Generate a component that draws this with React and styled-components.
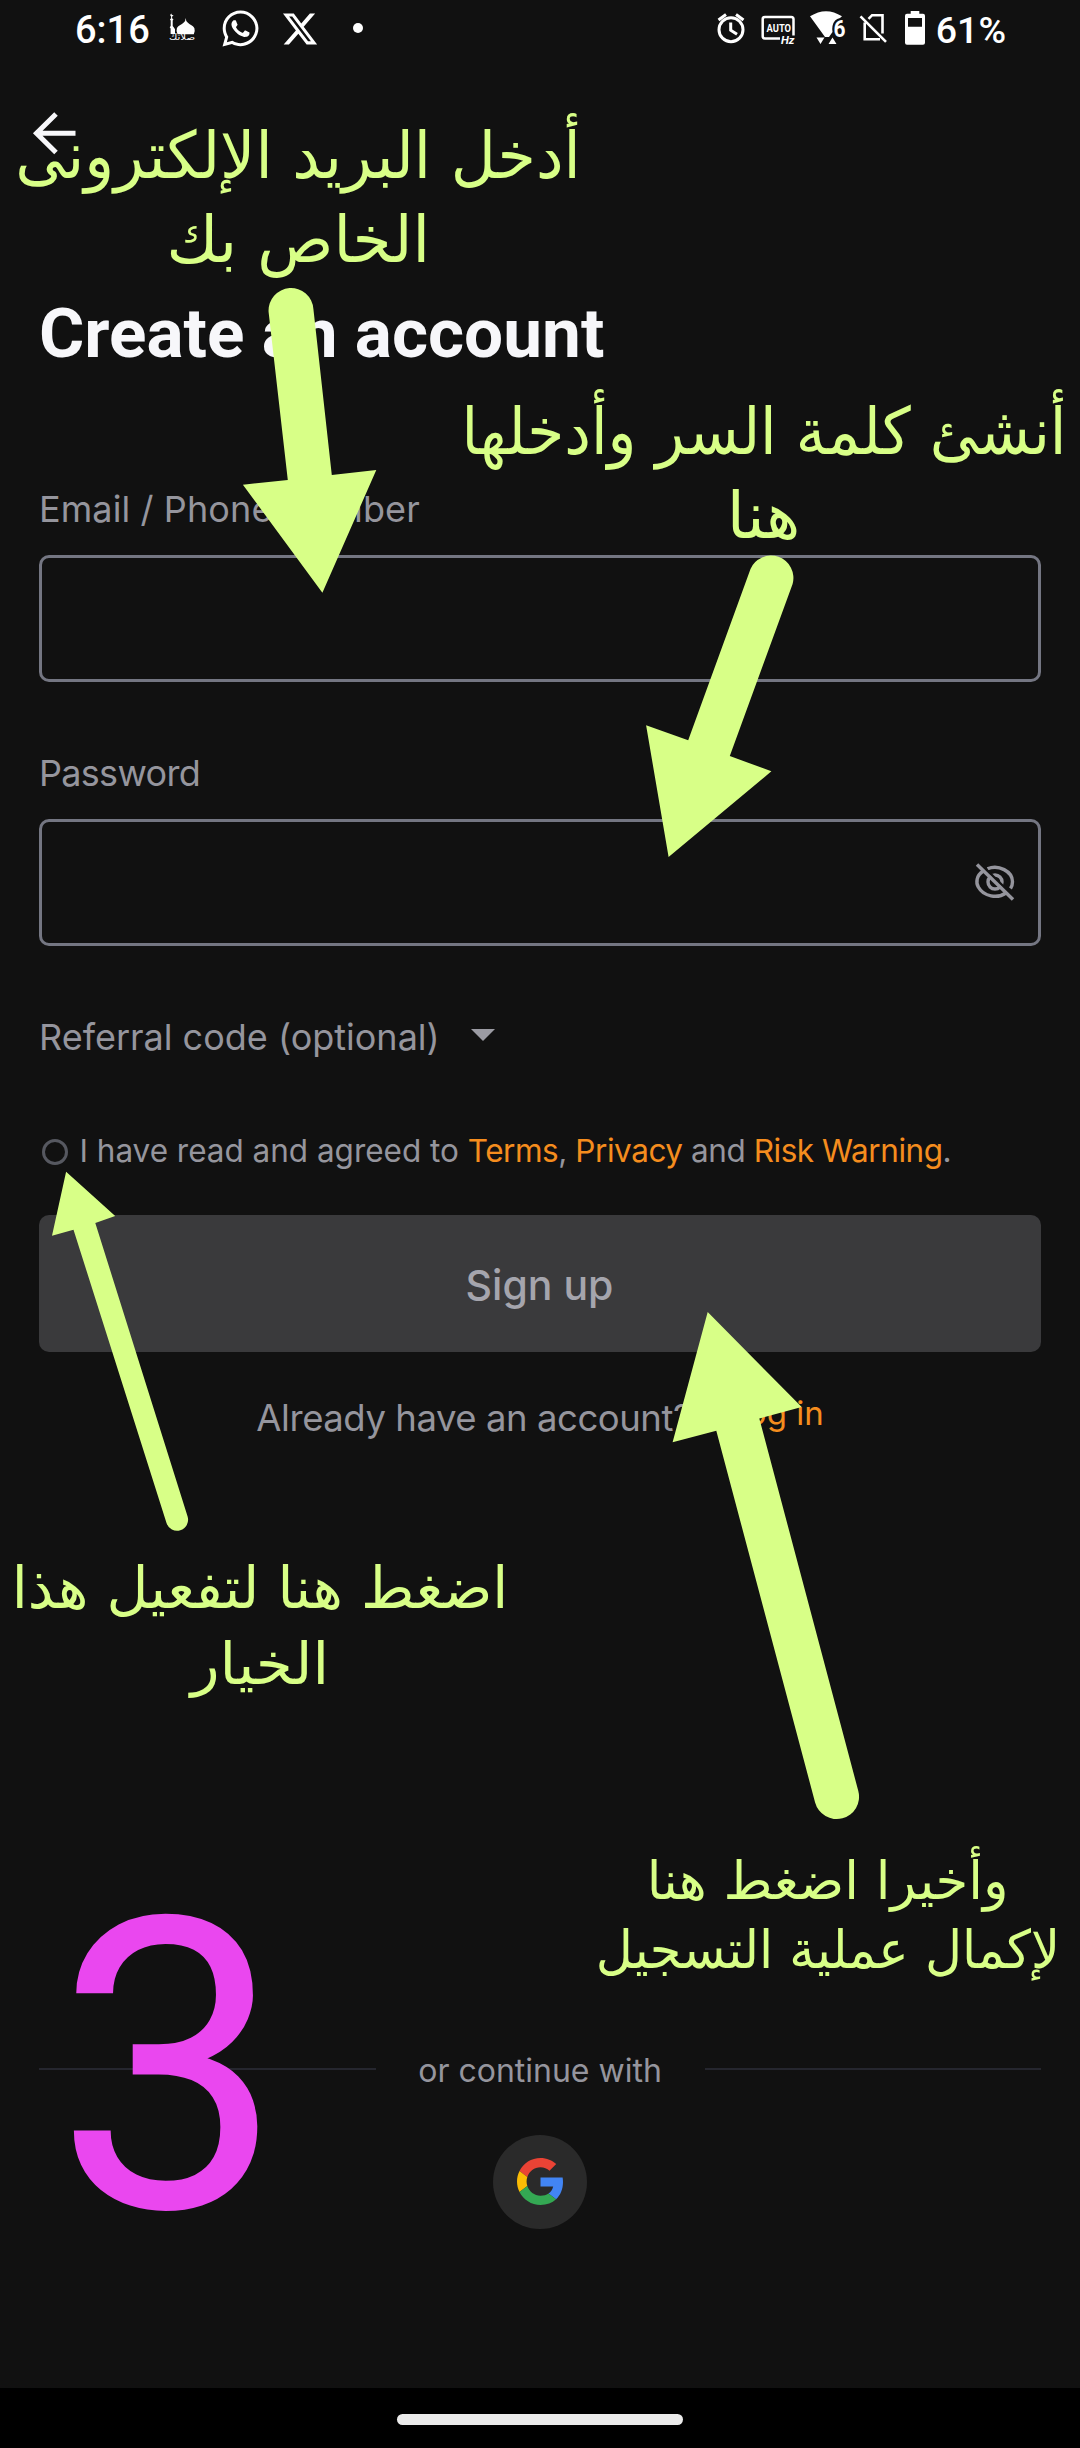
import React from "react";
import styled, { createGlobalStyle } from "styled-components";
import { FaWhatsapp, FaXTwitter } from "react-icons/fa6";

const LIME = "#d8ff87";
const ORANGE = "#f58d1e";
const GREY = "#95959d";
const BG = "#111111";

const GlobalStyle = createGlobalStyle`
  * { box-sizing: border-box; }
  body { margin: 0; background: ${BG}; }
`;

const Screen = styled.div`
  position: relative;
  width: 1080px;
  height: 2448px;
  overflow: hidden;
  display: flex;
  flex-direction: column;
  background: ${BG};
  font-family: Inter, "Noto Sans", sans-serif;
  color: ${GREY};
`;

/* status bar */

const StatusBar = styled.header`
  height: 60px;
  padding: 0 74px 0 75px;
  display: flex;
  justify-content: space-between;
  color: #fff;
  font-family: Roboto, sans-serif;
`;

const StatusGroup = styled.div`
  display: flex;
  align-items: flex-start;
`;

const StatusText = styled.span`
  margin-left: ${(p) => p.$ml || 0}px;
  font-size: ${(p) => p.$size}px;
  font-weight: 500;
  line-height: 60px;
  white-space: nowrap;
`;

const StatusSvg = styled.svg`
  display: block;
  height: 60px;
  width: ${(p) => p.$w}px;
  margin-left: ${(p) => p.$ml || 0}px;
  overflow: visible;
`;

const BrandIcon = styled.span`
  display: flex;
  width: ${(p) => p.$w}px;
  margin-left: ${(p) => p.$ml}px;
  height: 57px;
  align-items: center;
  justify-content: center;

  svg {
    flex: none;
  }
`;

const Dot = styled.span`
  width: 10px;
  height: 10px;
  margin: 23px 0 0 36px;
  border-radius: 50%;
  background: #fff;
`;

/* form */

const BackButton = styled.button`
  width: 48px;
  height: 48px;
  margin: 49px 0 0 30px;
  padding: 0;
  border: 0;
  background: none;
  color: #f7f7fa;

  svg {
    display: block;
  }
`;

const Form = styled.main`
  padding: 0 39px;
  display: flex;
  flex-direction: column;
`;

const Title = styled.h1`
  margin: 137px 0 0;
  font: 700 69.3px/80px Roboto, sans-serif;
  color: #f7f7fa;
  white-space: nowrap;
`;

const Field = styled.label`
  display: flex;
  flex-direction: column;
  gap: 24px;
  margin-top: ${(p) => p.$mt}px;
`;

const FieldLabel = styled.span`
  font-size: 36px;
  line-height: 44px;
  letter-spacing: ${(p) => p.$ls || 0}px;
`;

const InputBox = styled.span`
  height: 126.5px;
  border: 3px solid #747682;
  border-radius: 10px;
  padding-right: 21px;
  display: flex;
  align-items: center;
  justify-content: flex-end;
`;

const Referral = styled.div`
  margin-top: 69.5px;
  display: flex;
  align-items: center;
  font-size: 36px;
  line-height: 44px;
`;

const Caret = styled.span`
  margin: 0 0 4px 31px;
  border: 12px solid transparent;
  border-top-color: #9b9ba3;
  border-bottom: 0;
`;

const Agreement = styled.div`
  margin-top: 72px;
  padding-left: 3px;
  display: flex;
  align-items: center;
  font-size: 31.5px;
  line-height: 40px;
  letter-spacing: -0.45px;
  white-space: nowrap;
`;

const Lead = styled.span`
  letter-spacing: -0.02px;
`;

const Radio = styled.span`
  width: 26px;
  height: 26px;
  margin: 2px 11.5px 0 0;
  border: 3px solid #565860;
  border-radius: 50%;
`;

const Accent = styled.span`
  color: ${ORANGE};
`;

const SubmitButton = styled.button`
  height: 137px;
  margin-top: 44px;
  padding: 2px 1px 0 0;
  border: 0;
  border-radius: 10px;
  background: #3a3a3c;
  color: #a5a5ad;
  font: 500 41px/50px Inter, sans-serif;
`;

const LoginRow = styled.div`
  margin-top: 43.5px;
  display: flex;
  justify-content: center;
  align-items: flex-start;
  gap: 37px;
`;

const Question = styled.span`
  font-size: 36.5px;
  line-height: 44px;
  letter-spacing: -0.45px;
`;

const LoginLink = styled.a`
  font-size: 33px;
  line-height: 34px;
  color: ${ORANGE};
`;

const Divider = styled.div`
  margin-top: 611px;
  display: flex;
  align-items: center;
  gap: 42.7px;
  font-size: 32px;
  line-height: 40px;
  white-space: nowrap;
`;

const Rule = styled.span`
  flex: 1;
  height: 2px;
  margin-bottom: 4px;
  background: #25262e;
`;

const GoogleButton = styled.button`
  align-self: center;
  width: 94px;
  height: 94px;
  margin-top: 44px;
  padding: 0;
  border: 0;
  border-radius: 50%;
  background: #2a2a2a;
  display: flex;
  align-items: center;
  justify-content: center;
`;

const GestureBar = styled.footer`
  height: 60px;
  margin-top: auto;
  background: #000;
  display: flex;
  justify-content: center;
  padding-top: 26px;
`;

const GesturePill = styled.span`
  width: 286px;
  height: 11px;
  border-radius: 6px;
  background: #ebebeb;
`;

/* annotations laid over the screen */

const Arrows = styled.svg`
  position: absolute;
  inset: 0;
  pointer-events: none;
`;

const Note = styled.div`
  position: absolute;
  left: ${(p) => p.$cx}px;
  top: ${(p) => p.$top}px;
  transform: translateX(-50%);
  display: flex;
  flex-direction: column;
  align-items: center;
  direction: rtl;
  font-family: "DejaVu Sans", sans-serif;
  font-size: ${(p) => p.$size}px;
  line-height: ${(p) => p.$lh}px;
  color: ${LIME};
  white-space: nowrap;
`;

const NoteLine = styled.span`
  transform: scaleX(${(p) => p.$sx});
`;

const StepNumber = styled.div`
  position: absolute;
  left: 55px;
  top: 1868px;
  font: 400 407px/400px Roboto, sans-serif;
  color: #ea47ef;
`;

const MosqueIcon = () => (
  <StatusSvg $w={26} $ml={19.5} viewBox="170 0 26 60" fill="#fff">
    <path d="M171.6 34V28.5l-.9-1.2 1-1.3V20.5l-.8-1 1.2-1.2V16.6a2 2 0 0 1 .3-3.1 1.5 1.5 0 0 0 2 1.6 1.6 1.6 0 0 1-1.3 1.5v1.7l1.4 1.2-.8 1v5.5l1 1.3 1.3 2V34z" />
    <path d="M178.5 34.2q-1.600-3-.6-6c1.100-3 6.300-4 8.200-7.200l.6-3 .6 3c1.900 3.200 7 4.200 8.100 7.200q1 3-.6 6z" />
    <text x="170" y="39.5" fontSize="9" textLength="26" lengthAdjust="spacingAndGlyphs" fontFamily="DejaVu Sans">صلاتك</text>
  </StatusSvg>
);

const AlarmIcon = () => (
  <StatusSvg $w={28} viewBox="716 0 28 60" fill="none" stroke="#fff" strokeWidth="3">
    <circle cx="730" cy="29.700" r="12" />
    <path d="M717.500 20l7.500-5.500M742.500 20l-7.500-5.500M729.700 22.500v7.700l6.300 4" />
  </StatusSvg>
);

const AutoHzIcon = () => (
  <StatusSvg $w={34} $ml={16} viewBox="760 0 34 60" fill="#fff">
    <path d="M779 38.500H764q-2.300 0-2.300-2.300V19.300q0-2.300 2.300-2.300h26.200q2.300 0 2.300 2.300V35.500" fill="none" stroke="#fff" strokeWidth="2.500" />
    <text x="765.500" y="32.300" fontSize="11.500" fontWeight="700" fontFamily="Roboto" textLength="24.500" lengthAdjust="spacingAndGlyphs">AUTO</text>
    <text x="780" y="44.300" fontSize="11" fontWeight="700" fontStyle="italic" fontFamily="Roboto" textLength="13.500" lengthAdjust="spacingAndGlyphs">Hz</text>
  </StatusSvg>
);

const WifiIcon = () => (
  <StatusSvg $w={35} $ml={15} viewBox="809 0 35 60" fill="#fff">
    <path d="M809 16.300Q825 6 841 16.300L839 18q-6 1-7.500 8-.6 3.500 0 6l-3.500 5h-4z" />
    <path d="M815.500 37.500h8l-4 6.500zM827.500 44h8l-4-6.500z" />
    <text x="832.500" y="36.700" fontSize="24" fontWeight="700" fontFamily="Roboto" textLength="12" lengthAdjust="spacingAndGlyphs">6</text>
  </StatusSvg>
);

const NoSimIcon = () => (
  <StatusSvg $w={26} $ml={15} viewBox="859 0 26 60" fill="none" stroke="#fff" strokeWidth="2.600">
    <path d="M859.500 16.300l25.500 25.500M863.700 22.500V39.300H879M867.500 18.800l3.600-3.600H881.500V33.500" />
  </StatusSvg>
);

const BatteryIcon = () => (
  <StatusSvg $w={20} $ml={19} viewBox="904 0 20 60" fill="#fff">
    <path fillRule="evenodd" d="M909.700 11h8.600v2.700h3.700q2 0 2 2v27q0 2-2 2h-16q-2 0-2-2v-27q0-2 2-2h3.700zM907 18v8.700h14V18z" />
  </StatusSvg>
);

const EyeOffIcon = () => (
  <svg width="44" height="44" viewBox="973.5 860 44 44" fill="none" stroke={GREY} strokeWidth="3.400">
    <path d="M988 868.800C999 864 1013 871.500 1013 881.700Q1013 885.500 1011 888.500" />
    <path d="M983.500 871.300C977 875.500 976 882.500 979 887.300C984 896.500 998 899 1006.500 893" />
    <circle cx="995.500" cy="882" r="7" />
    <path d="M980.500 863.500l36 35.500" stroke={BG} strokeWidth="2.500" />
    <path d="M977.500 864.500l36 35" />
  </svg>
);

const GoogleLogo = () => (
  <svg width="47" height="47" viewBox="0 0 48 48">
    <path fill="#ea4335" d="M24 9.500c3.540 0 6.710 1.220 9.210 3.600l6.850-6.850C35.900 2.380 30.470 0 24 0 14.620 0 6.510 5.380 2.560 13.220l7.980 6.190C12.430 13.720 17.740 9.500 24 9.500z" />
    <path fill="#4285f4" d="M46.980 24.550c0-1.570-.15-3.090-.38-4.550H24v9.020h12.940c-.58 2.960-2.260 5.480-4.780 7.180l7.730 6c4.510-4.180 7.090-10.360 7.090-17.650z" />
    <path fill="#fbbc05" d="M10.530 28.590c-.48-1.450-.76-2.990-.76-4.590s.27-3.140.76-4.590l-7.980-6.190C.92 16.460 0 20.120 0 24c0 3.880.92 7.540 2.560 10.780l7.970-6.190z" />
    <path fill="#34a853" d="M24 48c6.480 0 11.930-2.130 15.890-5.810l-7.730-6c-2.150 1.450-4.920 2.300-8.160 2.300-6.260 0-11.570-4.220-13.470-9.910l-7.980 6.190C6.510 42.620 14.620 48 24 48z" />
  </svg>
);

export default function App() {
  return (
    <Screen>
      <GlobalStyle />
      <StatusBar>
        <StatusGroup>
          <StatusText $size={38}>6:16</StatusText>
          <MosqueIcon />
          <BrandIcon $w={36} $ml={27}><FaWhatsapp size={41} /></BrandIcon>
          <BrandIcon $w={34} $ml={25}><FaXTwitter size={38} /></BrandIcon>
          <Dot />
        </StatusGroup>
        <StatusGroup>
          <AlarmIcon />
          <AutoHzIcon />
          <WifiIcon />
          <NoSimIcon />
          <BatteryIcon />
          <StatusText $size={37.5} $ml={11}>61%</StatusText>
        </StatusGroup>
      </StatusBar>

      <BackButton aria-label="Back">
        <svg width="48" height="48" viewBox="30 109 48 48" fill="none" stroke="currentColor" strokeWidth="5">
          <path d="M75.500 133.300H37M56 114L36.500 133.300L56 152.500" />
        </svg>
      </BackButton>

      <Form>
        <Title>Create an account</Title>
        <Field $mt={113}>
          <FieldLabel $ls={0.1}>Email / Phone Number</FieldLabel>
          <InputBox />
        </Field>
        <Field $mt={69.5}>
          <FieldLabel $ls={-0.7}>Password</FieldLabel>
          <InputBox><EyeOffIcon /></InputBox>
        </Field>
        <Referral>
          Referral code (optional)
          <Caret />
        </Referral>
        <Agreement>
          <Radio />
          <span>
            <Lead>I have read and agreed to </Lead>
            <Accent>Terms</Accent>, <Accent>Privacy</Accent> and <Accent>Risk Warning</Accent>.
          </span>
        </Agreement>
        <SubmitButton>Sign up</SubmitButton>
        <LoginRow>
          <Question>Already have an account?</Question>
          <LoginLink>Log in</LoginLink>
        </LoginRow>
        <Divider>
          <Rule />
          or continue with
          <Rule />
        </Divider>
        <GoogleButton aria-label="Google"><GoogleLogo /></GoogleButton>
      </Form>

      <GestureBar><GesturePill /></GestureBar>

      <Arrows width="1080" height="2448" viewBox="0 0 1080 2448" fill={LIME}>
        <path d="M268.600 312A22.400 22.400 0 0 1 313.400 309L331.800 475L376.300 470L322.400 592.700L242.900 484.700L287.800 480Z" />
        <path d="M750.500 569A22.400 22.400 0 0 1 792.600 584L729.800 756L771.400 771.300L668.600 857L646.100 725.300L688.200 740.300Z" />
        <path d="M66.100 1171.700L115.200 1216L95.300 1223L187.600 1516.500A11 11 0 0 1 166.500 1523L73.500 1229.700L52 1235.700Z" />
        <path d="M707.700 1312L801.700 1407L759.300 1418.400L858.300 1791A22.300 22.300 0 0 1 815.100 1802.500L716.300 1430.800L672.600 1442.300Z" />
      </Arrows>

      <Note $cx={298} $top={113.5} $size={65} $lh={84.7}>
        <NoteLine $sx={0.953}>أدخل البريد الإلكترونى</NoteLine>
        <NoteLine $sx={0.97}>الخاص بك</NoteLine>
      </Note>
      <Note $cx={763.5} $top={390} $size={65} $lh={84}>
        <NoteLine $sx={0.921}>أنشئ كلمة السر وأدخلها</NoteLine>
        <NoteLine $sx={1}>هنا</NoteLine>
      </Note>
      <Note $cx={260} $top={1550} $size={58} $lh={76.3}>
        <NoteLine $sx={0.992}>اضغط هنا لتفعيل هذا</NoteLine>
        <NoteLine $sx={1.03}>الخيار</NoteLine>
      </Note>
      <Note $cx={827.5} $top={1845.5} $size={53} $lh={69}>
        <NoteLine $sx={0.998}>وأخيرا اضغط هنا</NoteLine>
        <NoteLine $sx={0.961}>لإكمال عملية التسجيل</NoteLine>
      </Note>

      <StepNumber>3</StepNumber>
    </Screen>
  );
}
